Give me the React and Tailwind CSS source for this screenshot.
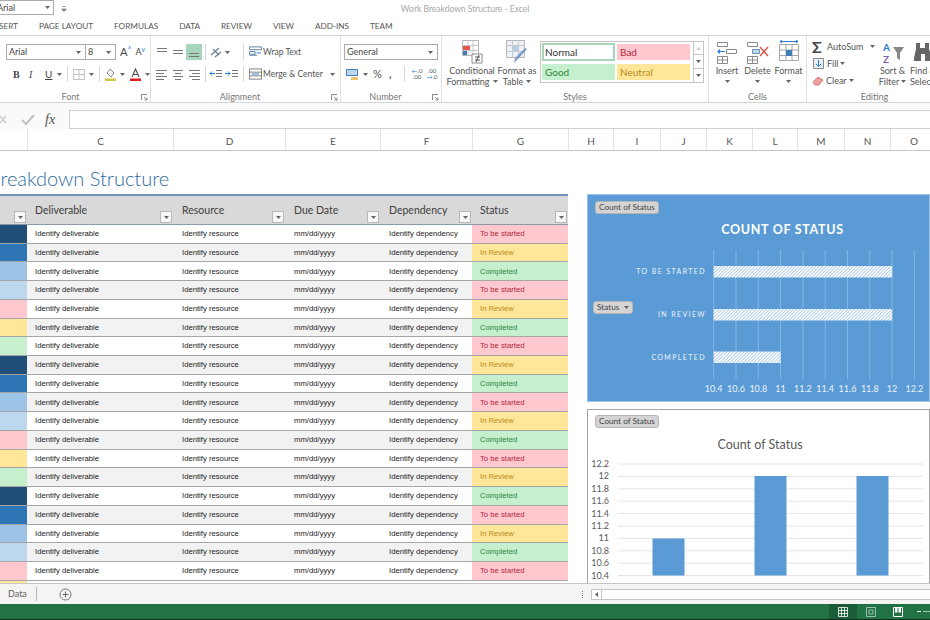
const ui = { fontFamily: 'Lato, "Open Sans", sans-serif' };

const columns = [
  { letter: 'C', width: 146 },
  { letter: 'D', width: 112 },
  { letter: 'E', width: 95 },
  { letter: 'F', width: 92 },
  { letter: 'G', width: 96 },
  { letter: 'H', width: 45 },
  { letter: 'I', width: 47 },
  { letter: 'J', width: 46 },
  { letter: 'K', width: 46 },
  { letter: 'L', width: 45 },
  { letter: 'M', width: 47 },
  { letter: 'N', width: 46 },
  { letter: 'O', width: 47 },
];

const swatches = ['bg-[#1f4e79]', 'bg-[#2e75b6]', 'bg-[#9dc3e6]', 'bg-[#bdd7ee]', 'bg-[#ffc7ce]', 'bg-[#ffe699]', 'bg-[#c6efce]'];
const statuses = [
  { label: 'To be started', cls: 'bg-[#ffc7ce] text-[#b4263c]' },
  { label: 'In Review', cls: 'bg-[#ffe699] text-[#b58a1c]' },
  { label: 'Completed', cls: 'bg-[#c6efce] text-[#2e8540]' },
];
const rows = Array.from({ length: 19 }, (_, i) => i);

const Caret = ({ className = '' }) => (
  <svg width="5" height="3" viewBox="0 0 5 3" className={`shrink-0 ${className}`}>
    <path d="M0 0h5L2.5 3z" fill="#666" />
  </svg>
);

const Lines = ({ rows: r }) => (
  <svg width="14" height="12" viewBox="0 0 14 12">
    {r.map(([x1, x2, y]) => (
      <path key={y} d={`M${x1} ${y + 0.5}H${x2}`} stroke="#777" strokeWidth="1" />
    ))}
  </svg>
);

const Launcher = () => (
  <svg width="7" height="7" viewBox="0 0 7 7" className="absolute right-[2px] bottom-[1px]">
    <path d="M0.5 6V.5H6M3 3l3 3M6 3.5V6H3.5" fill="none" stroke="#888" />
  </svg>
);

const GroupLabel = ({ children, className = '' }) => (
  <div className={`absolute left-0 right-0 bottom-[-1px] text-center text-[9px] leading-[12px] text-[#777] ${className}`}>{children}</div>
);

const Combo = ({ label, className }) => (
  <div className={`flex items-center justify-between h-[16px] border border-[#ababab] pl-[2px] pr-[4px] text-[9px] text-[#444] ${className}`}>
    <span>{label}</span>
    <Caret />
  </div>
);

const Sep = ({ className = '' }) => <div className={`w-px h-[16px] bg-[#d8d8d8] shrink-0 ${className}`} />;

const BigButton = ({ icon, lines, width, caretInline }) => (
  <div className="flex flex-col items-center shrink-0" style={{ width }}>
    <div className="h-[25px] flex items-end justify-center">{icon}</div>
    <div className="mt-[1px] text-[9px] leading-[11px] text-[#555] text-center whitespace-nowrap">{lines[0]}</div>
    <div className="text-[9px] leading-[11px] text-[#555] text-center whitespace-nowrap flex items-center gap-[3px] justify-center min-h-[11px]">
      {lines[1]}
      {caretInline && <Caret />}
    </div>
  </div>
);

const StyleCell = ({ label, cls }) => (
  <div className={`w-[73px] flex items-center text-[10px] ${cls}`}>{label}</div>
);

const Pill = ({ children, className }) => (
  <div className={`absolute flex items-center h-[13px] rounded-[3px] border border-[#b5b5b5] bg-[#d4d4d4] px-[3px] text-[8.2px] text-[#444] whitespace-nowrap ${className}`} style={ui}>
    {children}
  </div>
);

const FilterButton = () => (
  <div className="absolute right-[1px] bottom-[1px] w-[12px] h-[12px] bg-[#f7f7f7] border border-[#b8b8b8] flex items-center justify-center">
    <Caret />
  </div>
);

const TitleBar = () => (
  <div className="h-[18px] relative bg-white">
    <div className="flex items-start">
      <div className="w-[54px] h-[15px] border border-l-0 border-[#ababab] flex items-center justify-between pr-[3px] overflow-hidden">
        <span className="text-[9px] text-[#444] ml-[-3px]">Arial</span>
        <Caret />
      </div>
      <svg width="6" height="6" viewBox="0 0 6 6" className="ml-[7px] mt-[6px]">
        <path d="M1 .5h4M.5 3h5L3 5.5z" fill="#777" stroke="#777" strokeWidth=".6" />
      </svg>
    </div>
    <div className="absolute inset-x-0 top-[3px] text-center text-[8.5px] leading-[12px] text-[#a8a8a8]">Work Breakdown Structure - Excel</div>
  </div>
);

const tabs = [
  ['SERT', 'ml-[-1px]'],
  ['PAGE LAYOUT', 'ml-[21px]'],
  ['FORMULAS', 'ml-[21px]'],
  ['DATA', 'ml-[21px]'],
  ['REVIEW', 'ml-[21px]'],
  ['VIEW', 'ml-[21px]'],
  ['ADD-INS', 'ml-[21px]'],
  ['TEAM', 'ml-[21px]'],
];

const TabRow = () => (
  <div className="h-[18px] flex items-center border-b border-[#d4d4d4] text-[8.2px] text-[#555] whitespace-nowrap">
    {tabs.map(([t, m]) => (
      <span key={t} className={m}>{t}</span>
    ))}
  </div>
);

const FontGroup = () => (
  <div className="relative w-[148px] shrink-0 h-full pl-[3px] pt-[8px] border-r border-[#e0e0e0]">
    <div className="flex items-center h-[16px]">
      <Combo label="Arial" className="w-[80px]" />
      <Combo label="8" className="w-[31px] ml-[-1px]" />
      <span className="ml-[4px] text-[11px] text-[#444]">A<sup className="text-[#2b7cd3] text-[7px]">^</sup></span>
      <span className="ml-[4px] text-[9px] text-[#444]">A<sup className="text-[#2b7cd3] text-[7px]">v</sup></span>
    </div>
    <div className="flex items-center h-[16px] mt-[6px] text-[10px] text-[#444]">
      <span className="ml-[7px] w-[16px] font-bold" style={{ fontFamily: '"Liberation Serif", serif' }}>B</span>
      <span className="w-[16px] italic" style={{ fontFamily: '"Liberation Serif", serif' }}>I</span>
      <span className="underline w-[12px]">U</span>
      <Caret />
      <Sep className="ml-[5px]" />
      <svg width="12" height="11" viewBox="0 0 12 11" className="ml-[5px]">
        <path d="M.5.5h11v10H.5zM6 .5v10M.5 5.5h11" fill="none" stroke="#c4c4c4" />
      </svg>
      <Caret className="ml-[4px]" />
      <Sep className="ml-[5px]" />
      <svg width="13" height="13" viewBox="0 0 13 13" className="ml-[4px]">
        <path d="M6 1l4 4-3 4-4-4z" fill="none" stroke="#888" />
        <path d="M1 10.5h11V13H1z" fill="#d5c74a" />
      </svg>
      <Caret className="ml-[3px]" />
      <svg width="13" height="13" viewBox="0 0 13 13" className="ml-[4px]">
        <path d="M3 9l3.5-8L10 9M4.5 6.5h4" fill="none" stroke="#555" strokeWidth="1.2" />
        <path d="M1 10.5h11V13H1z" fill="#e01b24" />
      </svg>
      <Caret className="ml-[3px]" />
    </div>
    <GroupLabel className="pr-[12px]">Font</GroupLabel>
    <Launcher />
  </div>
);

const AlignGroup = () => (
  <div className="relative w-[190px] shrink-0 h-full pl-[3px] pt-[8px] border-r border-[#e0e0e0]">
    <div className="flex items-center h-[16px]">
      <div className="w-[16px] flex justify-center"><Lines rows={[[2, 12, 2], [2, 12, 5]]} /></div>
      <div className="w-[16px] flex justify-center"><Lines rows={[[2, 12, 4], [2, 12, 7]]} /></div>
      <div className="w-[16px] h-[16px] bg-[#a6d5bc] flex justify-center items-center"><Lines rows={[[2, 12, 7], [2, 12, 10]]} /></div>
      <Sep className="ml-[3px]" />
      <svg width="14" height="12" viewBox="0 0 14 12" className="ml-[3px] shrink-0">
        <path d="M2 9l8-7M4 3l6 6M6 11l6-5" fill="none" stroke="#6b7f96" strokeWidth="1.2" />
      </svg>
      <Caret className="ml-[2px]" />
      <Sep className="ml-[13px]" />
      <svg width="13" height="12" viewBox="0 0 14 12" className="ml-[5px] shrink-0">
        <path d="M.5.5h13v3H.5zM.5 5.5h6v3h-6zM.5 9.5h8" fill="none" stroke="#5a7fa6" />
        <path d="M8 7h5" stroke="#2b7cd3" />
      </svg>
      <span className="ml-[1px] text-[8.5px] text-[#555] whitespace-nowrap">Wrap Text</span>
    </div>
    <div className="flex items-center h-[16px] mt-[6px]">
      <div className="w-[16px] shrink-0 flex justify-center"><Lines rows={[[1, 12, 2], [1, 9, 5], [1, 12, 8], [1, 9, 11]]} /></div>
      <div className="w-[16px] shrink-0 flex justify-center"><Lines rows={[[2, 12, 2], [4, 10, 5], [2, 12, 8], [4, 10, 11]]} /></div>
      <div className="w-[16px] shrink-0 flex justify-center"><Lines rows={[[2, 13, 2], [5, 13, 5], [2, 13, 8], [5, 13, 11]]} /></div>
      <Sep className="ml-[3px]" />
      <svg width="14" height="12" viewBox="0 0 14 12" className="ml-[3px] shrink-0">
        <path d="M7 2.5h6M7 5.5h6M7 8.5h6" stroke="#777" />
        <path d="M1 5.5h5M3 3.5l-2 2 2 2" fill="none" stroke="#2b7cd3" />
      </svg>
      <svg width="14" height="12" viewBox="0 0 14 12" className="ml-[2px] shrink-0">
        <path d="M7 2.5h6M7 5.5h6M7 8.5h6" stroke="#777" />
        <path d="M0 5.5h5M3 3.5l2 2-2 2" fill="none" stroke="#2b7cd3" />
      </svg>
      <Sep className="ml-[4px]" />
      <svg width="13" height="12" viewBox="0 0 14 12" className="ml-[5px] shrink-0">
        <path d="M.5.5h13v11H.5zM.5 4h13M.5 8h13" fill="none" stroke="#777" />
        <path d="M3 6h8" stroke="#2b7cd3" />
      </svg>
      <span className="ml-[1px] text-[8.5px] text-[#555] whitespace-nowrap">Merge &amp; Center</span>
      <Caret className="ml-[7px]" />
    </div>
    <GroupLabel className="pr-[11px]">Alignment</GroupLabel>
    <Launcher />
  </div>
);

const NumberGroup = () => (
  <div className="relative w-[101px] shrink-0 h-full pl-[3px] pt-[8px] border-r border-[#e0e0e0]">
    <Combo label="General" className="w-[94px]" />
    <div className="flex items-center h-[16px] mt-[6px] text-[#555]">
      <svg width="13" height="13" viewBox="0 0 13 13" className="ml-[2px]">
        <path d="M.5 1.5h11v6H.5z" fill="#bcd7ef" stroke="#3f7cb8" />
        <path d="M5 9h7v3H5z" fill="#e8c66a" />
      </svg>
      <Caret className="ml-[4px]" />
      <span className="ml-[5px] w-[11px] text-[11px]">%</span>
      <span className="ml-[5px] w-[5px] text-[11px] font-bold">,</span>
      <Sep className="ml-[10px]" />
      <span className="ml-[6px] text-[6px] leading-[6px] text-center w-[12px]"><span className="text-[#2b7cd3]">←</span>.0<br />.00</span>
      <span className="ml-[3px] text-[6px] leading-[6px] text-center w-[12px]">.00<br /><span className="text-[#2b7cd3]">→</span>.0</span>
    </div>
    <GroupLabel className="pr-[11px]">Number</GroupLabel>
    <Launcher />
  </div>
);

const CondIcon = () => (
  <svg width="21" height="24" viewBox="0 0 21 24">
    <path d="M.5.5h16v15H.5z" fill="#fff" stroke="#b5b5b5" />
    <path d="M.5 5.5h16M.5 10.5h16M6 .5v15M11 .5v15" stroke="#c8c8c8" />
    <path d="M1 6h7v4H1z" fill="#e2574c" />
    <path d="M1 11h4v4H1z" fill="#3f7cb8" />
    <path d="M10 14h10v9H10z" fill="#fff" stroke="#8a8a8a" />
    <path d="M13 17h5M13 20h5M14 22l3-7" stroke="#555" />
  </svg>
);

const TableIcon = () => (
  <svg width="22" height="24" viewBox="0 0 22 24">
    <path d="M.5.5h18v17H.5z" fill="#eef2f7" stroke="#b5b5b5" />
    <path d="M.5 5.5h18M.5 11.5h18M6.5.5v17M12.5.5v17" stroke="#c2c8d0" />
    <path d="M7 6h5v5H7z" fill="#b8cde6" />
    <path d="M21 9l-9 10-4 4 1-5 10-10z" fill="#7d9cc4" />
  </svg>
);

const StylesGroup = () => (
  <div className="relative w-[267px] shrink-0 h-full border-r border-[#e0e0e0] flex pt-[3px] pl-[7px]">
    <BigButton icon={<CondIcon />} lines={['Conditional', 'Formatting']} width={46} caretInline />
    <BigButton icon={<TableIcon />} lines={['Format as', 'Table']} width={44} caretInline />
    <div className="ml-[1px] w-[164px] h-[42px] mt-[2px] border border-[#c6c6c6] flex shrink-0">
      <div className="pl-[1px] pt-[1px] flex flex-col gap-[3px] w-[153px]">
        <div className="flex gap-[2px] h-[18px]">
          <StyleCell label="Normal" cls="h-[18px] pl-[1px] bg-white border-2 border-[#a6d5bc] text-[#333]" />
          <StyleCell label="Bad" cls="h-[16px] mt-[1px] pl-[3px] bg-[#ffc7ce] text-[#b4263c]" />
        </div>
        <div className="flex gap-[2px]">
          <StyleCell label="Good" cls="h-[16px] pl-[3px] bg-[#c6efce] text-[#2e8540]" />
          <StyleCell label="Neutral" cls="h-[16px] pl-[3px] bg-[#ffe699] text-[#b58a1c]" />
        </div>
      </div>
      <div className="w-[10px] border-l border-[#c6c6c6] flex flex-col">
        <div className="h-[13px] border-b border-[#c6c6c6] flex items-center justify-center"><Caret className="rotate-180 opacity-30" /></div>
        <div className="h-[14px] border-b border-[#c6c6c6] flex items-center justify-center"><Caret /></div>
        <div className="flex-1 flex items-center justify-center"><Caret /></div>
      </div>
    </div>
    <GroupLabel>Styles</GroupLabel>
  </div>
);

const InsertIcon = () => (
  <svg width="20" height="22" viewBox="0 0 20 22">
    <path d="M.5.5h10v4H.5zM9.5 7.5h10v4h-10zM.5 14.5h10v7H.5zM5.5 14.5v7M.5 18h10" fill="none" stroke="#8a8a8a" />
    <path d="M1 9.5h7M3 7.5l-2 2 2 2" fill="none" stroke="#2b7cd3" strokeWidth="1.2" />
  </svg>
);

const DeleteIcon = () => (
  <svg width="22" height="22" viewBox="0 0 22 22">
    <path d="M.5.5h10v4H.5zM.5 14.5h10v7H.5zM5.5 14.5v7M.5 18h10" fill="none" stroke="#8a8a8a" />
    <path d="M5.5 7.5h7v4h-7z" fill="#bcd7ef" stroke="#6b8fb5" />
    <path d="M13 5l8 9M21 5l-8 9" stroke="#d9503f" strokeWidth="1.4" />
  </svg>
);

const FormatIcon = () => (
  <svg width="20" height="24" viewBox="0 0 20 24">
    <path d="M1 1.5h18M3 0l-2 1.5L3 3M17 0l2 1.5L17 3" fill="none" stroke="#2b7cd3" />
    <path d="M.5 4.5h19v16H.5zM7 4.5v16M13 4.5v16M.5 10h19M.5 15.5h19" fill="none" stroke="#a8a8a8" />
    <path d="M7 10h6v6H7z" fill="#3f7cb8" />
  </svg>
);

const CellsGroup = () => (
  <div className="relative w-[98px] shrink-0 h-full border-r border-[#e0e0e0] flex pt-[3px] pl-[3px]">
    {[['Insert', <InsertIcon key="i" />, 30], ['Delete', <DeleteIcon key="d" />, 31], ['Format', <FormatIcon key="f" />, 31]].map(([label, icon, w]) => (
      <div key={label} className="flex flex-col items-center" style={{ width: w }}>
        <div className="h-[25px] flex items-end">{icon}</div>
        <div className="mt-[1px] text-[9px] leading-[11px] text-[#555]">{label}</div>
        <div className="h-[11px] flex items-center"><Caret /></div>
      </div>
    ))}
    <GroupLabel>Cells</GroupLabel>
  </div>
);

const EditingGroup = () => (
  <div className="relative flex-1 min-w-0 h-full flex pt-[2px] pl-[5px] text-[9px] text-[#555] overflow-hidden">
    <div className="w-[65px] shrink-0 flex flex-col">
      <div className="flex items-center h-[17px]">
        <span className="text-[16px] font-bold leading-none text-[#444] w-[15px]">Σ</span>
        <span>AutoSum</span>
        <Caret className="ml-[7px]" />
      </div>
      <div className="flex items-center h-[17px]">
        <svg width="11" height="11" viewBox="0 0 11 11" className="ml-[1px]">
          <path d="M.5.5h10v10H.5z" fill="#e8eef6" stroke="#8a8a8a" />
          <path d="M5.5 2v6M3 6l2.5 2.5L8 6" fill="none" stroke="#2b7cd3" />
        </svg>
        <span className="ml-[3px]">Fill</span>
        <Caret className="ml-[2px]" />
      </div>
      <div className="flex items-center h-[17px]">
        <svg width="12" height="10" viewBox="0 0 12 10">
          <path d="M1 6l5-5 5 3-4 5H3z" fill="#eca0a0" stroke="#d98080" />
        </svg>
        <span className="ml-[2px]">Clear</span>
        <Caret className="ml-[2px]" />
      </div>
    </div>
    <div className="w-[31px] shrink-0 flex flex-col items-center pt-[1px]">
      <div className="h-[25px] flex items-end">
        <svg width="22" height="22" viewBox="0 0 22 22">
          <text x="1" y="9" fontSize="10" fill="#2b7cd3" fontWeight="700">A</text>
          <text x="1" y="21" fontSize="10" fill="#8a5fb8" fontWeight="700">Z</text>
          <path d="M11 5h11l-4 6v7l-3-2v-5z" fill="#888" />
        </svg>
      </div>
      <div className="mt-[1px] leading-[11px] whitespace-nowrap">Sort &amp;</div>
      <div className="leading-[11px] flex items-center gap-[2px] whitespace-nowrap">Filter<Caret /></div>
    </div>
    <div className="ml-[2px] shrink-0 flex flex-col items-start pt-[1px]">
      <div className="h-[25px] flex items-end ml-[3px] pb-[3px]">
        <svg width="20" height="19" viewBox="0 0 20 19">
          <path d="M3 1h4v5h5V1h4v6l3 9v3h-7v-7H8v7H1v-3l2-9z" fill="#666" />
        </svg>
      </div>
      <div className="mt-[1px] leading-[11px] whitespace-nowrap">Find &amp;</div>
      <div className="leading-[11px] whitespace-nowrap">Select</div>
    </div>
    <GroupLabel className="pl-[12px]">Editing</GroupLabel>
  </div>
);

const Ribbon = () => (
  <div className="h-[67px] flex border-b border-[#d4d4d4] pl-[3px]">
    <FontGroup />
    <AlignGroup />
    <NumberGroup />
    <StylesGroup />
    <CellsGroup />
    <EditingGroup />
  </div>
);

const FormulaBar = () => (
  <div className="h-[26px] flex items-end bg-[#fafafa]">
    <div className="w-[69px] h-[19px] flex items-center">
      <svg width="8" height="10" viewBox="0 0 8 10"><path d="M0 1l6 7M6 1L0 8" stroke="#c9c9c9" strokeWidth="1.3" /></svg>
      <svg width="14" height="12" viewBox="0 0 14 12" className="ml-[13px]"><path d="M1 6l4 4 8-9" fill="none" stroke="#c2c2c2" strokeWidth="2" /></svg>
      <span className="ml-[10px] italic text-[14px] text-[#555]" style={{ fontFamily: '"Liberation Serif", serif' }}>fx</span>
    </div>
    <div className="flex-1 h-[19px] bg-white border border-r-0 border-[#d0d0d0]" />
  </div>
);

const ColumnHeaders = () => (
  <div className="h-[22px] flex bg-white border-b border-[#c6c6c6] overflow-hidden text-[10px] text-[#555]">
    <div className="w-[27px] shrink-0" />
    {columns.map((c) => (
      <div key={c.letter} className="shrink-0 flex items-center justify-center border-l border-[#e3e3e3] pt-[4px]" style={{ width: c.width }}>
        {c.letter}
      </div>
    ))}
  </div>
);

const headers = [
  { label: 'Deliverable', width: 146, pad: 'pl-[8px]' },
  { label: 'Resource', width: 112, pad: 'pl-[9px]' },
  { label: 'Due Date', width: 95, pad: 'pl-[9px]' },
  { label: 'Dependency', width: 92, pad: 'pl-[9px]' },
  { label: 'Status', width: 96, pad: 'pl-[8px]' },
];

const WorkTable = () => (
  <div className="w-[568px] shrink-0">
    <div className="h-[31px] flex bg-[#d9d9d9] border-t-2 border-[#6f94b8] border-b border-b-[#8b9aa8]">
      <div className="relative w-[27px]"><FilterButton /></div>
      {headers.map((h) => (
        <div key={h.label} className={`relative pt-[7px] text-[10.5px] leading-[14px] text-[#404040] ${h.pad}`} style={{ ...ui, width: h.width }}>
          {h.label}
          <FilterButton />
        </div>
      ))}
    </div>
    {rows.map((i) => {
      const status = statuses[i % 3];
      return (
        <div key={i} className={`h-[18.72px] flex items-center border-b border-[#a6a6a6] text-[7.7px] text-[#222] ${i % 2 ? 'bg-[#f2f2f2]' : 'bg-white'}`} style={{ fontFamily: '"Liberation Sans", Arial, sans-serif' }}>
          <div className={`w-[27px] h-full ${swatches[i % 7]}`} />
          <div className="w-[146px] pl-[8px]">Identify deliverable</div>
          <div className="w-[112px] pl-[9px]">Identify resource</div>
          <div className="w-[95px] pl-[9px]">mm/dd/yyyy</div>
          <div className="w-[92px] pl-[9px]">Identify dependency</div>
          <div className={`w-[96px] h-full pl-[8px] flex items-center ${status.cls}`}>{status.label}</div>
        </div>
      );
    })}
    <div className="h-[4px] flex">
      <div className="w-[27px] bg-[#ffe699]" />
    </div>
  </div>
);

const xTicks = ['10.4', '10.6', '10.8', '11', '11.2', '11.4', '11.6', '11.8', '12', '12.2'];
const hBars = [
  { label: 'TO BE STARTED', y: 71, w: 178.5 },
  { label: 'IN REVIEW', y: 114, w: 178.5 },
  { label: 'COMPLETED', y: 156.5, w: 67 },
];

const BarChart = () => (
  <div className="relative h-[208px] bg-[#5b9bd5] border border-[#9dc3e6] overflow-hidden">
    <svg width="343" height="206" viewBox="0 0 343 206" className="block" style={ui}>
      <defs>
        <pattern id="hatch" width="2.4" height="2.4" patternUnits="userSpaceOnUse" patternTransform="rotate(-45)">
          <rect width="2.4" height="2.4" fill="#ffffff" />
          <rect width="2.4" height="0.9" fill="#a9c9e8" />
        </pattern>
      </defs>
      <text x="194.5" y="39" textAnchor="middle" fontSize="12.5" fontWeight="700" letterSpacing="0.7" fill="#fff">COUNT OF STATUS</text>
      {xTicks.map((t, i) => (
        <g key={t}>
          <path d={`M${125.7 + i * 22.3} 55V184`} stroke="#85b5e0" strokeWidth="1" />
          <text x={125.7 + i * 22.3} y="197" textAnchor="middle" fontSize="9" fill="#eaf2fa">{t}</text>
        </g>
      ))}
      {hBars.map((b) => (
        <g key={b.label}>
          <rect x="125.7" y={b.y} width={b.w} height="11.5" fill="url(#hatch)" />
          <text x="118" y={b.y + 8} textAnchor="end" fontSize="7" letterSpacing="1.4" fill="#eaf2fa">{b.label}</text>
        </g>
      ))}
    </svg>
    <Pill className="left-[7px] top-[6px]">Count of Status</Pill>
    <Pill className="left-[5px] top-[106px] gap-[5px]">Status <Caret /></Pill>
  </div>
);

const yTicks = ['12.2', '12', '11.8', '11.6', '11.4', '11.2', '11', '10.8', '10.6', '10.4'];
const vBars = [
  { x: 64.5, top: 128.5 },
  { x: 166.5, top: 66 },
  { x: 268.5, top: 66 },
];

const ColumnChart = () => (
  <div className="relative h-[175px] bg-white border border-[#a6a6a6] overflow-hidden">
    <svg width="343" height="173" viewBox="0 0 343 173" className="block" style={ui}>
      <text x="172" y="39" textAnchor="middle" fontSize="12.5" fill="#595959">Count of Status</text>
      {yTicks.map((t, i) => (
        <g key={t}>
          <path d={`M30 ${54 + i * 12.4}H335`} stroke="#e4e4e4" strokeWidth="1" />
          <text x="21" y={57 + i * 12.4} textAnchor="end" fontSize="9" fill="#595959">{t}</text>
        </g>
      ))}
      {vBars.map((b) => (
        <rect key={b.x} x={b.x} y={b.top} width="32" height={165.5 - b.top} fill="#5b9bd5" />
      ))}
    </svg>
    <Pill className="left-[7px] top-[5px]">Count of Status</Pill>
  </div>
);

const Sheet = () => (
  <div className="h-[432px] bg-white overflow-hidden">
    <div className="h-[43px] pt-[12px] text-[20px] font-light leading-[30px] text-[#2e6ca4] ml-[-12px] whitespace-nowrap" style={ui}>Breakdown Structure</div>
    <div className="flex">
      <WorkTable />
      <div className="ml-[19px] flex-1 min-w-0 flex flex-col gap-[7px]">
        <BarChart />
        <ColumnChart />
      </div>
    </div>
  </div>
);

const SheetTabs = () => (
  <div className="h-[21px] flex items-center bg-[#f5f4f3] border-t border-[#c6c6c6] text-[9px] text-[#666]">
    <span className="ml-[8px]">Data</span>
    <div className="ml-[9px] w-px h-[14px] bg-[#bbb]" />
    <svg width="13" height="13" viewBox="0 0 13 13" className="ml-[22px]">
      <circle cx="6.5" cy="6.5" r="5.5" fill="none" stroke="#777" />
      <path d="M6.5 3.5v6M3.5 6.5h6" stroke="#666" />
    </svg>
    <div className="ml-auto flex items-center w-[349px]">
      <span className="ml-[1px] w-[1px] h-[7px] border-l border-dotted border-[#777]" />
      <div className="ml-[8px] flex-1 h-[11px] bg-white border border-r-0 border-[#c6c6c6] flex items-center">
        <div className="w-[10px] h-full border-r border-[#c6c6c6] flex items-center justify-center">
          <svg width="3" height="5" viewBox="0 0 3 5"><path d="M3 0v5L0 2.5z" fill="#666" /></svg>
        </div>
      </div>
    </div>
  </div>
);

const StatusBar = () => (
  <div className="h-[16px] flex items-center justify-end bg-[#217346] border-b border-[#10301f] overflow-hidden">
    <div className="w-[28px] h-full bg-[#1a5c38] flex items-center justify-center">
      <svg width="10" height="10" viewBox="0 0 10 10"><path d="M.5.5h9v9h-9zM.5 3.5h9M.5 6.5h9M3.5.5v9M6.5.5v9" fill="none" stroke="#fff" strokeWidth=".8" /></svg>
    </div>
    <div className="w-[28px] flex justify-center">
      <svg width="10" height="10" viewBox="0 0 10 10"><path d="M.5.5h9v9h-9zM3 3h4v4H3z" fill="none" stroke="#b8d4c4" strokeWidth=".8" /></svg>
    </div>
    <div className="w-[26px] flex justify-center">
      <svg width="10" height="10" viewBox="0 0 10 10"><path d="M.5.5h9v9h-9z" fill="none" stroke="#fff" /><path d="M2 .5h2.5v5H2zM5.5.5H8v5H5.5z" fill="#fff" /></svg>
    </div>
    <div className="ml-[6px] w-[4px] h-[1px] bg-white" />
    <div className="ml-[2px] w-[8px] h-[1px] bg-[#9fc5b0] mr-[-1px]" />
  </div>
);

export default function App() {
  return (
    <div className="w-[930px] h-[620px] overflow-hidden bg-white flex flex-col" style={ui}>
      <TitleBar />
      <TabRow />
      <Ribbon />
      <FormulaBar />
      <ColumnHeaders />
      <Sheet />
      <SheetTabs />
      <StatusBar />
    </div>
  );
}
